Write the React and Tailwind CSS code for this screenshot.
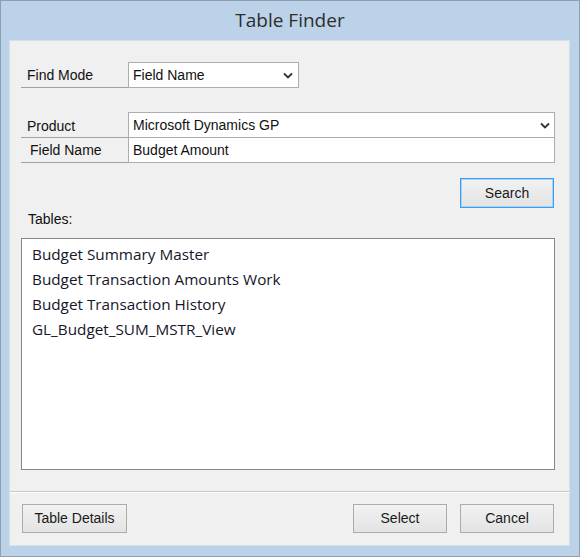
import React from "react";

const Chevron = () => (
  <svg width="10" height="7" viewBox="0 0 10 7" className="block">
    <path d="M1 1.5 L5 5.5 L9 1.5" fill="none" stroke="#333" strokeWidth="1.8" />
  </svg>
);

const Btn = ({ children, className = "", focused = false }) => (
  <div
    className={
      "flex items-center justify-center h-[29px] text-[14px] text-[#1a1a1a] bg-gradient-to-b from-[#f2f2f2] to-[#e3e3e3] border " +
      (focused ? "border-[#3c9cf0] shadow-[inset_0_0_0_1px_#a8d3f7] " : "border-[#acacac] ") +
      className
    }
    style={{ fontFamily: '"Liberation Sans", Arial, sans-serif' }}
  >
    {children}
  </div>
);

export default function App() {
  const items = [
    "Budget Summary Master",
    "Budget Transaction Amounts Work",
    "Budget Transaction History",
    "GL_Budget_SUM_MSTR_View",
  ];
  const sans = { fontFamily: '"Liberation Sans", Arial, sans-serif' };
  return (
    <div className="w-[580px] h-[557px] bg-[#bcd2e9] border border-[#8d9fb3] flex flex-col">
      <div
        className="h-[39px] flex items-center justify-center text-[19px] text-[#2e2e2e]"
        style={{ fontFamily: '"Open Sans", "Noto Sans", sans-serif' }}
      >
        Table Finder
      </div>
      <div className="ml-[8px] mr-[9px] h-[506px] bg-[#f0f0f0] border border-[#d5dfea] flex flex-col" style={sans}>
        <div className="px-[11px] flex flex-col">
          {/* Find mode row */}
          <div className="flex mt-[21px] h-[26px]">
            <div className="w-[107px] border-b border-[#a0a0a0] flex items-end pl-[6px] pb-[1px] text-[14px] text-[#111]">
              Find Mode
            </div>
            <div className="w-[171px] h-[26px] bg-white border border-[#abadb3] flex items-center justify-between pl-[4px] pr-[5px] text-[14px] text-[#111]">
              <span>Field Name</span>
              <Chevron />
            </div>
          </div>
          {/* Product row */}
          <div className="flex mt-[24px] h-[26px]">
            <div className="w-[107px] border-b border-[#a0a0a0] flex items-end pl-[6px] pb-[0px] text-[14px] text-[#111]">
              Product
            </div>
            <div className="w-[427px] h-[26px] bg-white border border-[#abadb3] flex items-center justify-between pl-[4px] pr-[4px] text-[14px] text-[#111]">
              <span>Microsoft Dynamics GP</span>
              <Chevron />
            </div>
          </div>
          <div className="flex h-[25px]">
            <div className="w-[107px] border-b border-[#a0a0a0] flex items-end pl-[9px] pb-[1px] text-[14px] text-[#111]">
              Field Name
            </div>
            <div className="w-[427px] h-[25px] bg-white border border-t-0 border-[#abadb3] flex items-center pl-[4px] text-[14px] text-[#111]">
              Budget Amount
            </div>
          </div>
          {/* Search */}
          <div className="flex justify-end mt-[15px] pr-[4px]">
            <Btn className="w-[94px] h-[30px]" focused>
              Search
            </Btn>
          </div>
          <div className="h-[30px] pt-[3px] pl-[7px] text-[14px] leading-[16px] text-[#111]">Tables:</div>
          <div
            className="w-[534px] h-[232px] bg-white border border-[#828790] pt-[3px] pl-[10px]"
            style={{ fontFamily: '"Open Sans", "Noto Sans", sans-serif' }}
          >
            {items.map((t) => (
              <div key={t} className="h-[25px] flex items-center text-[15.3px] text-[#16162a]">
                {t}
              </div>
            ))}
          </div>
        </div>
        <div className="mt-[21px] border-t border-[#c8c8c8] shadow-[0_1px_0_#ffffff]" />
        <div className="flex pl-[12px] pr-[15px] mt-[12px]">
          <Btn className="w-[105px]">Table Details</Btn>
          <div className="flex-1" />
          <Btn className="w-[94px]">Select</Btn>
          <Btn className="w-[94px] ml-[13px]">Cancel</Btn>
        </div>
      </div>
    </div>
  );
}
